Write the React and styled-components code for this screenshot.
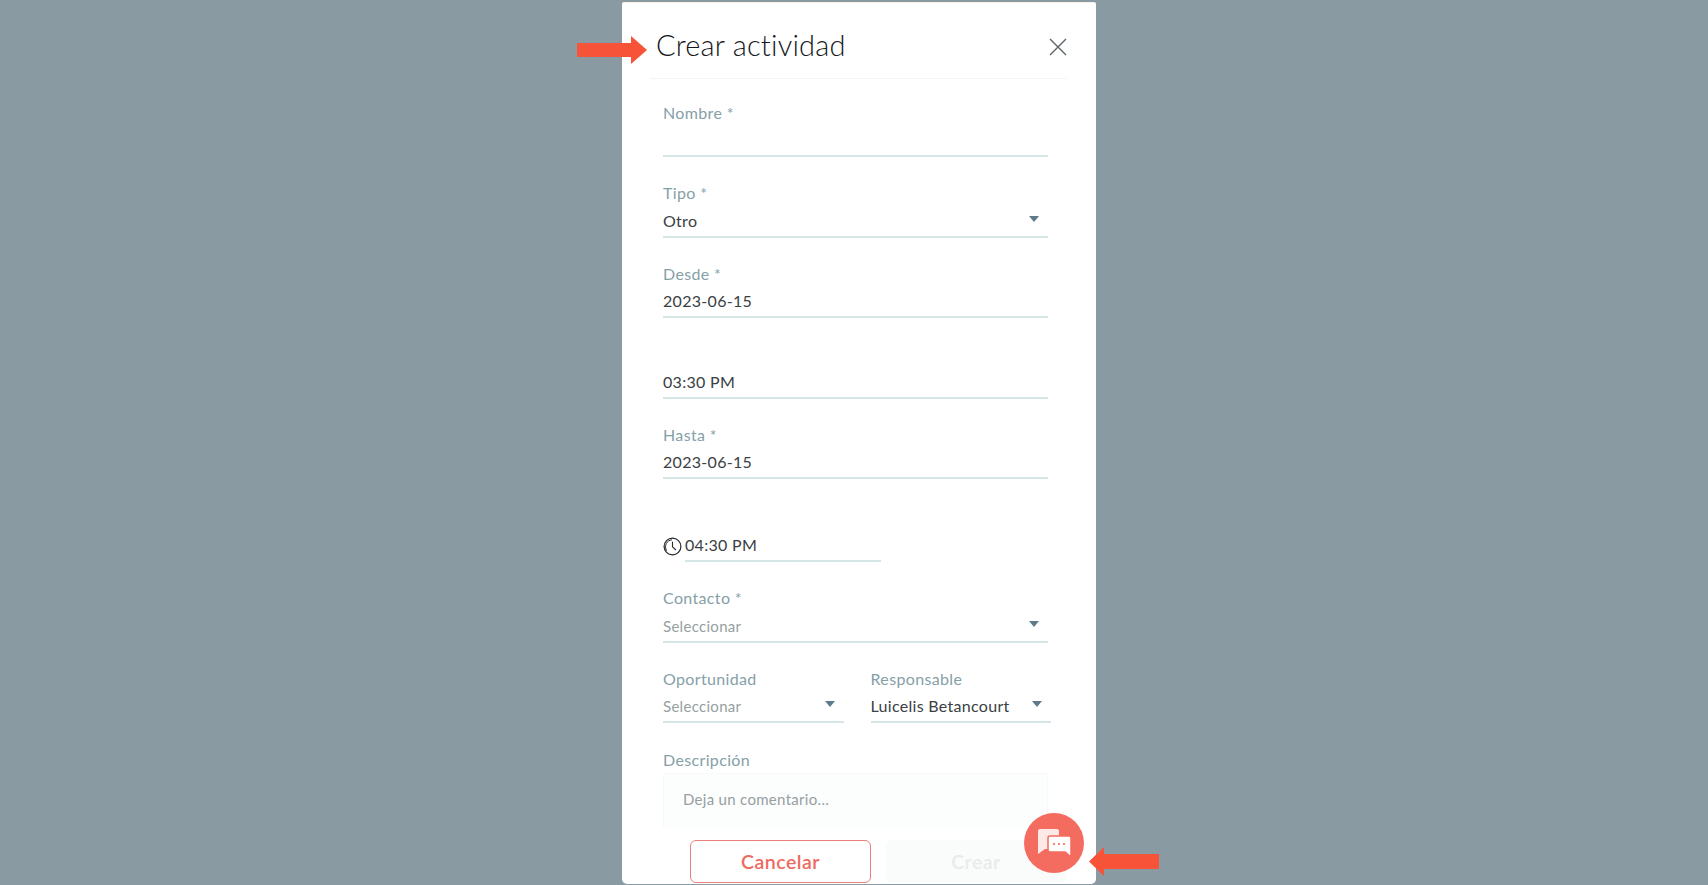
// App.jsx
import React from 'react';
import styled, { createGlobalStyle } from 'styled-components';

const GlobalStyle = createGlobalStyle`
  html, body {
    margin: 0;
    padding: 0;
    height: 100%;
    overflow: hidden;
    font-family: 'Lato', 'Noto Sans', sans-serif;
  }
`;

const Overlay = styled.div`
  position: relative;
  display: flex;
  justify-content: flex-start;
  height: 885px;
  padding: 2px 0 0 622px;
  box-sizing: border-box;
  background: #8a9aa2;
  overflow: hidden;
`;

const Modal = styled.section`
  position: relative;
  width: 474px;
  height: 882px;
  background: #fff;
  border-top: 1px solid #f6f3e6;
  border-radius: 2px 2px 5px 5px;
  box-sizing: border-box;
  padding: 0 29px 0 28px;
`;

const Header = styled.header`
  display: flex;
  justify-content: space-between;
  align-items: center;
  height: 76px;
  box-sizing: border-box;
  padding: 8px 0 0 6px;
  border-bottom: 1px solid #f3f5f5;
`;

const Title = styled.h1`
  margin: 0;
  font-size: 29px;
  font-weight: 300;
  color: #14181b;
  letter-spacing: 0.2px;
`;

const CloseButton = styled.button`
  display: flex;
  padding: 0;
  margin-top: 5px;
  border: 0;
  background: none;
  cursor: pointer;
`;

const Form = styled.form`
  display: flex;
  flex-direction: column;
  padding: 0 19px 0 13px;
`;

const Field = styled.div`
  display: flex;
  flex-direction: column;
  height: ${(p) => p.$height || 80.5}px;
  flex: ${(p) => (p.$grow ? 1 : 'none')};
  min-width: 0;
`;

const FieldRow = styled.div`
  display: flex;
  gap: 27px;
  margin-right: -3px;
`;

const Label = styled.label`
  display: block;
  height: 25px;
  margin-top: ${(p) => p.$top || 24}px;
  font-size: 16px;
  line-height: 24px;
  letter-spacing: 0.35px;
  color: #86a0a8;
`;

const Control = styled.div`
  display: flex;
  align-items: center;
  justify-content: space-between;
  height: 32px;
  padding-bottom: 1px;
  box-sizing: border-box;
  border-bottom: 2px solid #d5e6e7;
  font-size: ${(p) => (p.$placeholder ? 15 : 16)}px;
  letter-spacing: 0.3px;
  color: ${(p) => (p.$placeholder ? '#969fa1' : '#3a4043')};
`;

const Caret = styled.span`
  width: 0;
  height: 0;
  margin: -3px 9px 0 0;
  border-left: 5px solid transparent;
  border-right: 5px solid transparent;
  border-top: 6px solid #5f7a88;
`;

const ClockRow = styled.div`
  display: flex;
  align-items: flex-end;
  gap: 3px;
  margin-top: 51px;
`;

const ClockControl = styled(Control)`
  width: 196px;
`;

const ClockSlot = styled.span`
  display: flex;
  margin-bottom: 6px;
`;

const Textarea = styled.div`
  height: 55px;
  padding: 16px 19px 0;
  box-sizing: border-box;
  background: #fcfdfd;
  border: 1px solid #f8f9f9;
  border-bottom: 0;
  border-radius: 3px 3px 0 0;
  font-size: 15px;
  letter-spacing: 0.3px;
  color: #969fa1;
`;

const Actions = styled.div`
  display: flex;
  gap: 15px;
  margin: 12px 0 0 40px;
`;

const ActionButton = styled.button`
  width: ${(p) => (p.$primary ? 180 : 181)}px;
  height: 43px;
  padding: 0;
  box-sizing: border-box;
  border-radius: 6px;
  border: 1.5px solid ${(p) => (p.$primary ? '#fafbfb' : '#e8817a')};
  background: ${(p) => (p.$primary ? '#fafbfb' : '#fff')};
  color: ${(p) => (p.$primary ? '#e8ebec' : '#ee6a5f')};
  font-family: inherit;
  font-size: 19.5px;
  font-weight: 600;
  letter-spacing: 0.5px;
`;

const ChatFab = styled.button`
  position: absolute;
  left: 1024px;
  top: 813px;
  display: flex;
  align-items: center;
  justify-content: center;
  width: 60px;
  height: 60px;
  padding: 0;
  border: 0;
  border-radius: 50%;
  background: #f36c5f;
`;

const Arrow = styled.svg`
  position: absolute;
  left: ${(p) => p.$left}px;
  top: ${(p) => p.$top}px;
`;

const TextField = ({ label, value, placeholder, caret, top, grow, height }) => (
  <Field $grow={grow} $height={height}>
    <Label $top={top}>{label}</Label>
    <Control $placeholder={placeholder}>
      <span>{value}</span>
      {caret && <Caret />}
    </Control>
  </Field>
);

const ClockIcon = () => (
  <svg width="19" height="19" viewBox="0 0 19 19" fill="none" stroke="#22282b">
    <circle cx="9.5" cy="9.5" r="8.4" strokeWidth="1.2" />
    <path d="M3.6 13.5A7 7 0 0 1 9 2.8" strokeWidth="1" />
    <path d="M9.5 4.8v5l3.4 3.2" strokeWidth="1.1" />
  </svg>
);

const ChatIcon = () => (
  <svg width="33" height="28" viewBox="0 0 33 28">
    <path d="M2 0h17a2 2 0 0 1 2 2v16a2 2 0 0 1-2 2H7l-7 5V2a2 2 0 0 1 2-2z" fill="#fde9e6" />
    <path d="M12 7h19a2 2 0 0 1 2 2v19l-6-5H12a2 2 0 0 1-2-2V9a2 2 0 0 1 2-2z" fill="#fff" stroke="#f36c5f" strokeWidth="1.5" />
    <circle cx="16" cy="15" r="1.1" fill="#f36c5f" />
    <circle cx="21" cy="15" r="1.1" fill="#f36c5f" />
    <circle cx="26" cy="15" r="1.1" fill="#f36c5f" />
  </svg>
);

const App = () => (
  <Overlay>
    <GlobalStyle />
    <Modal>
      <Header>
        <Title>Crear actividad</Title>
        <CloseButton type="button" aria-label="Cerrar">
          <svg width="18" height="18" viewBox="0 0 18 18" stroke="#5d6468" strokeWidth="1.4">
            <path d="M1 1l16 16M17 1L1 17" />
          </svg>
        </CloseButton>
      </Header>
      <Form>
        <TextField label="Nombre *" top={22} height={78} />
        <TextField label="Tipo *" value="Otro" caret />
        <TextField label="Desde *" value="2023-06-15" />
        <Field $height={81}>
          <Label />
          <Control><span>03:30 PM</span></Control>
        </Field>
        <TextField label="Hasta *" value="2023-06-15" height={80} />
        <Field $height={83}>
          <ClockRow>
            <ClockSlot><ClockIcon /></ClockSlot>
            <ClockControl><span>04:30 PM</span></ClockControl>
          </ClockRow>
        </Field>
        <TextField label="Contacto *" value="Seleccionar" placeholder caret height={81} />
        <FieldRow>
          <TextField label="Oportunidad" value="Seleccionar" placeholder caret grow height={80} />
          <TextField label="Responsable" value="Luicelis Betancourt" caret grow height={80} />
        </FieldRow>
        <Label $top={25}>Descripción</Label>
        <Textarea>Deja un comentario...</Textarea>
      </Form>
      <Actions>
        <ActionButton type="button">Cancelar</ActionButton>
        <ActionButton type="button" $primary disabled>Crear</ActionButton>
      </Actions>
    </Modal>
    <ChatFab type="button" aria-label="Chat">
      <ChatIcon />
    </ChatFab>
    <Arrow $left={577} $top={36} width="70" height="28" viewBox="0 0 70 28">
      <path d="M0 7h54V0l16 14-16 14v-7H0z" fill="#f65338" />
    </Arrow>
    <Arrow $left={1089} $top={847} width="70" height="29" viewBox="0 0 70 29">
      <path d="M70 7H15V0L0 14.5 15 29v-7h55z" fill="#f65338" />
    </Arrow>
  </Overlay>
);

export default App;
